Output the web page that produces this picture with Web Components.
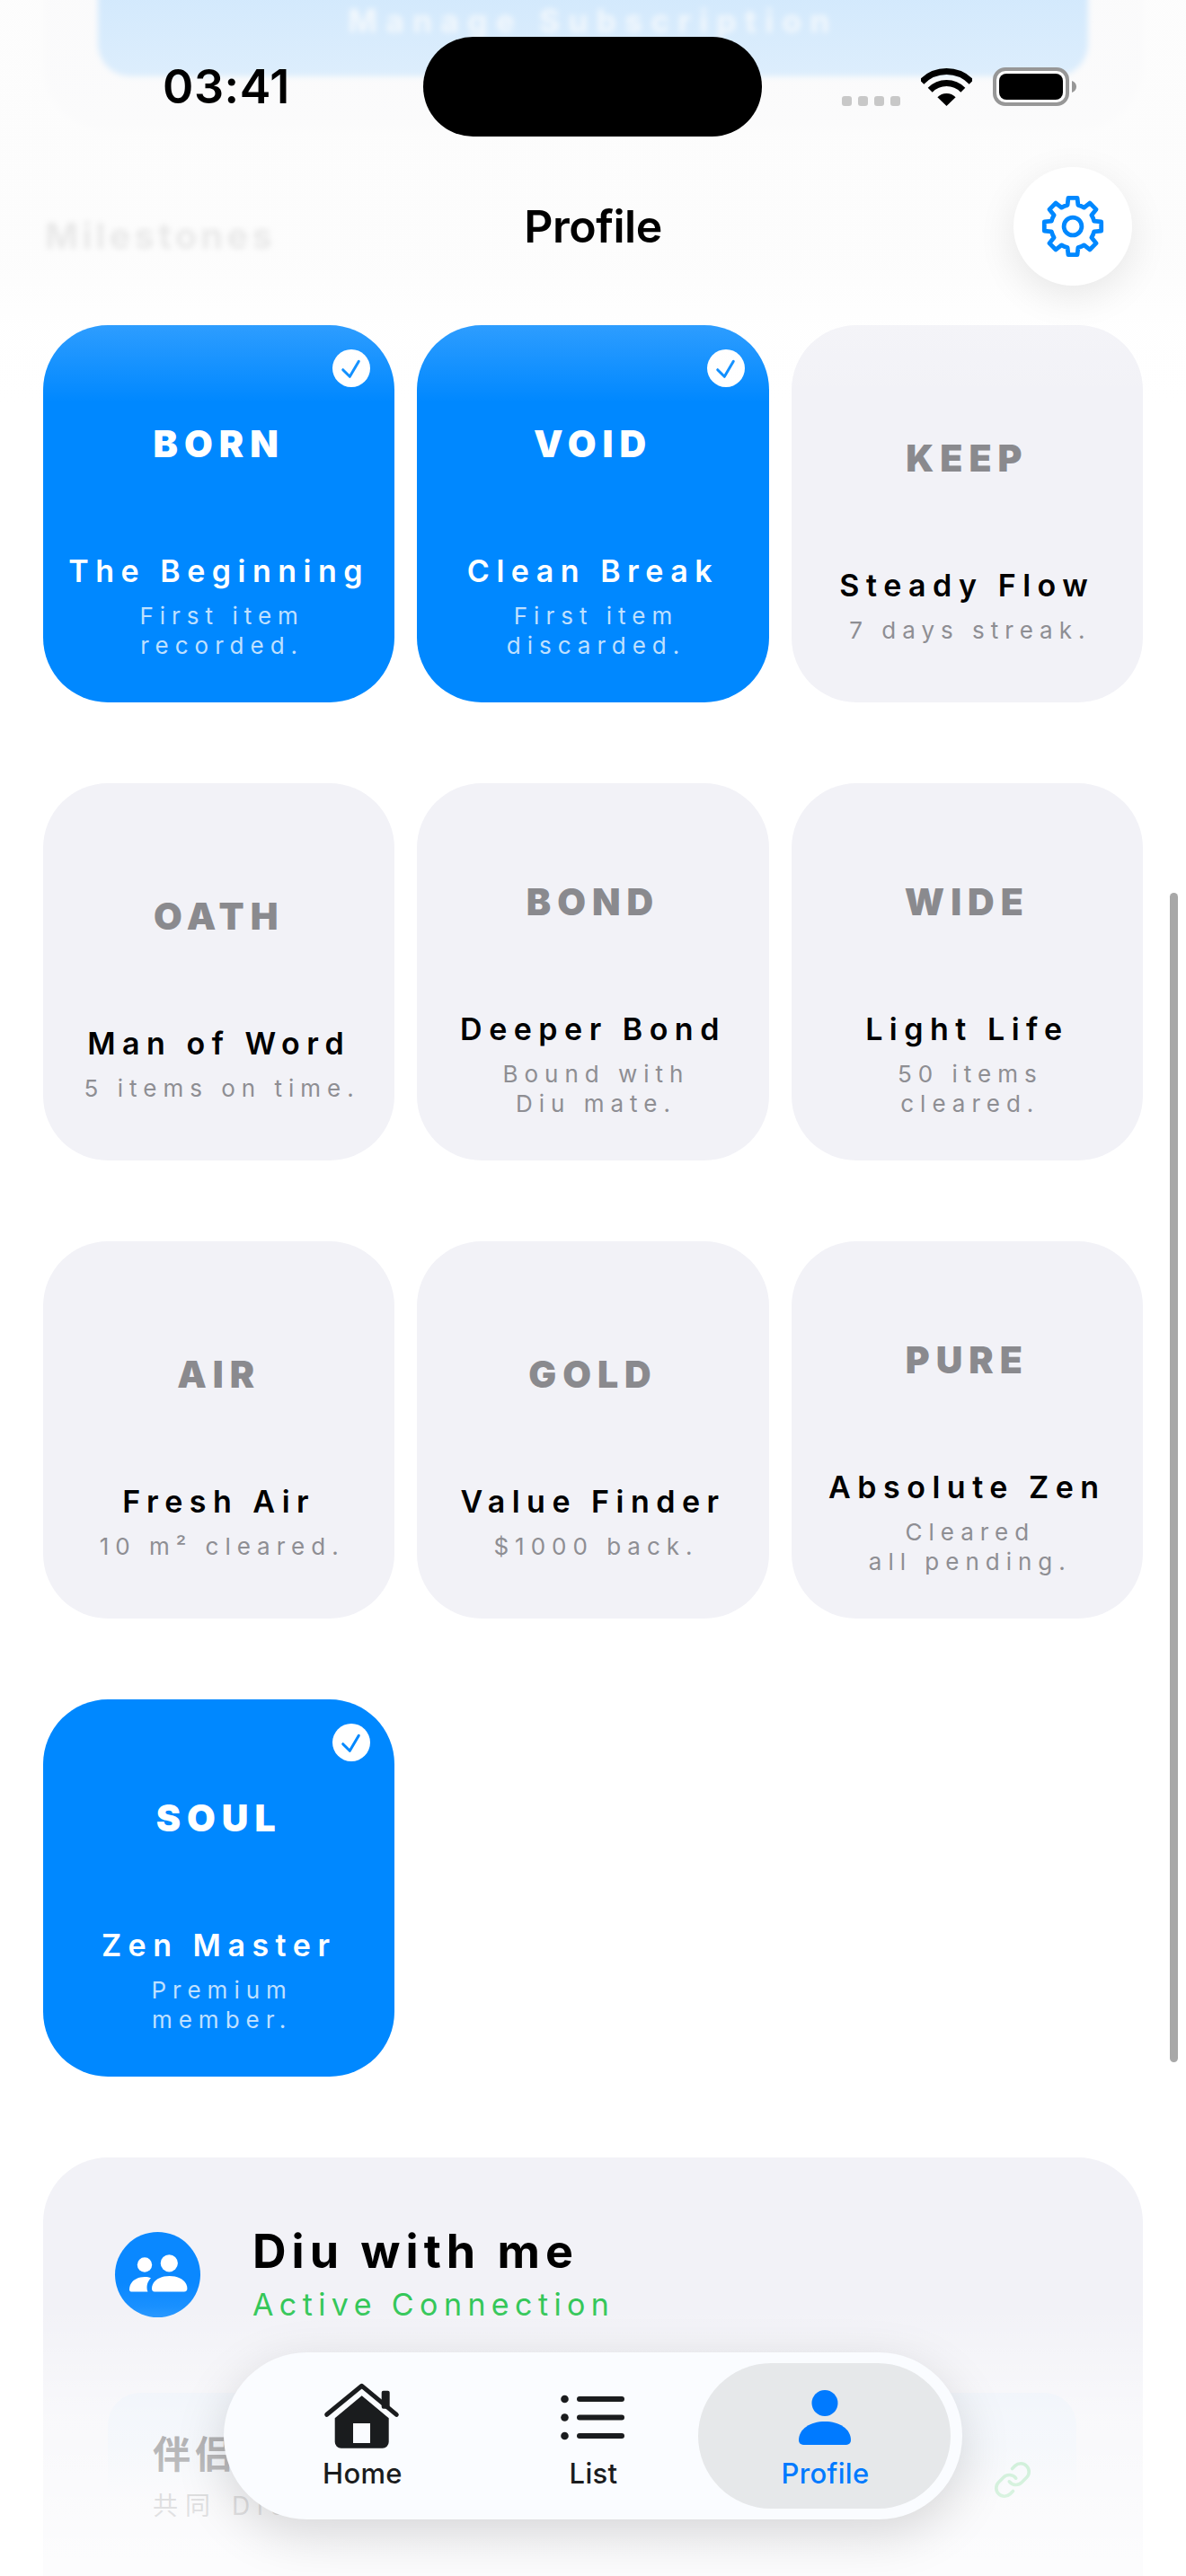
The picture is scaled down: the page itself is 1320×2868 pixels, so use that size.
<!DOCTYPE html>
<html lang="en">
<head>
<meta charset="utf-8">
<title>Profile</title>
<style>
    html, body { margin: 0; background: #fff; }
    body { font-family: Inter, "Noto Sans CJK SC", sans-serif; }
</style>
</head>
<body>
<profile-screen>
    <plan-card slot="content"></plan-card>
    <section-title slot="content">Milestones</section-title>
    <milestone-grid slot="content">
        <milestone-card code="BORN" name="The Beginning" done>First item<br>recorded.</milestone-card>
        <milestone-card code="VOID" name="Clean Break" done>First item<br>discarded.</milestone-card>
        <milestone-card code="KEEP" name="Steady Flow">7 days streak.</milestone-card>
        <milestone-card code="OATH" name="Man of Word">5 items on time.</milestone-card>
        <milestone-card code="BOND" name="Deeper Bond">Bound with<br>Diu mate.</milestone-card>
        <milestone-card code="WIDE" name="Light Life">50 items<br>cleared.</milestone-card>
        <milestone-card code="AIR" name="Fresh Air">10 m² cleared.</milestone-card>
        <milestone-card code="GOLD" name="Value Finder">$1000 back.</milestone-card>
        <milestone-card code="PURE" name="Absolute Zen">Cleared<br>all pending.</milestone-card>
        <milestone-card code="SOUL" name="Zen Master" done>Premium<br>member.</milestone-card>
    </milestone-grid>
    <link-card slot="content"></link-card>

    <status-bar slot="overlay"></status-bar>
    <nav-header slot="overlay">Profile</nav-header>
    <tab-bar slot="overlay"></tab-bar>
</profile-screen>

<script>
const SCREEN_TEMPLATE = `
    <style>
        :host {
            display: block;
            position: relative;
            width: 1320px;
            height: 2868px;
            overflow: hidden;
            background: #fff;
        }
        .scroll {
            height: 100%;
            padding: 0 48px;
            box-sizing: border-box;
        }
        /* fades sit over the scrolled content */
        .top-fade {
            position: absolute;
            top: 0;
            left: 0;
            right: 0;
            height: 450px;
            background: linear-gradient(to bottom,
                rgba(252, 252, 252, 0.84) 0,
                rgba(252, 252, 252, 0.9) 150px,
                rgba(252, 252, 252, 0.9) 290px,
                rgba(252, 252, 252, 0.18) 362px,
                rgba(252, 252, 252, 0) 448px);
        }
        .bottom-fade {
            position: absolute;
            bottom: 0;
            left: 0;
            right: 0;
            height: 300px;
            background: linear-gradient(to bottom,
                rgba(255, 255, 255, 0) 0,
                rgba(255, 255, 255, 0.5) 120px,
                rgba(255, 255, 255, 0.8) 100%);
        }
        .scrollbar {
            position: absolute;
            top: 994px;
            right: 9px;
            width: 9px;
            height: 1302px;
            border-radius: 5px;
            background: #a8a8a8;
        }
    </style>
    <div class="scroll"><slot name="content"></slot></div>
    <div class="top-fade"></div>
    <div class="bottom-fade"></div>
    <div class="scrollbar"></div>
    <slot name="overlay"></slot>
`;

class ProfileScreen extends HTMLElement {
    constructor() {
        super();
        this.attachShadow({ mode: 'open' });
        this.shadowRoot.innerHTML = SCREEN_TEMPLATE;
    }
}

const STATUS_TEMPLATE = `
    <style>
        :host {
            display: flex;
            position: absolute;
            top: 0;
            left: 0;
            padding: 41px 0 0 181px;
            align-items: center;
            color: #000;
        }
        .time {
            width: 290px;
            font-size: 52px;
            font-weight: 600;
            line-height: 60px;
            letter-spacing: 0.6px;
        }
        .island {
            width: 377px;
            height: 111px;
            border-radius: 56px;
            background: #000;
        }
        .icons {
            display: flex;
            align-items: flex-end;
            gap: 23px;
            margin-left: 89px;
        }
        .dots { display: flex; gap: 7px; }
        .dots i {
            width: 11px;
            height: 11px;
            border-radius: 3px;
            background: #c8c8c8;
        }
        svg { display: block; }
    </style>
    <span class="time">03:41</span>
    <div class="island"></div>
    <div class="icons">
        <div class="dots"><i></i><i></i><i></i><i></i></div>
        <svg width="57" height="42" viewBox="0 0 57 42" fill="none" stroke="#000" stroke-width="7">
            <path d="M.8 15.3a38.5 38.5 0 0 1 55.4 0"/>
            <path d="M10.2 24.3a25.5 25.5 0 0 1 36.6 0"/>
            <path d="M28.5 42 18.4 32.3a14 14 0 0 1 20.2 0z" fill="#000" stroke="none"/>
        </svg>
        <svg width="93" height="43" viewBox="0 0 93 43">
            <rect x="2" y="2" width="81" height="39" rx="12" fill="#fff" stroke="#979797" stroke-width="4"/>
            <rect x="7" y="7" width="71" height="29" rx="8"/>
            <path d="M88 15c3 1 5 3.500 5 6.500s-2 5.500-5 6.500z" fill="#979797"/>
        </svg>
    </div>
`;

class StatusBar extends HTMLElement {
    constructor() {
        super();
        this.attachShadow({ mode: 'open' });
        this.shadowRoot.innerHTML = STATUS_TEMPLATE;
    }
}

// cog outline, eight teeth, one on each axis
function gearPath(cx, cy) {
    const pt = (r, deg) => {
        const a = deg * Math.PI / 180;
        return (cx + r * Math.cos(a)).toFixed(2) + ' ' + (cy + r * Math.sin(a)).toFixed(2);
    };
    const outer = 32.1;
    const root = 24.4;
    let d = '';
    for (let i = 0; i < 8; i++) {
        const a = i * 45;
        d += (i ? 'L' : 'M') + pt(root, a - 14);
        d += 'L' + pt(outer, a - 9) + 'L' + pt(outer, a + 9) + 'L' + pt(root, a + 14);
        d += `A${root} ${root} 0 0 1 ` + pt(root, a + 31);
    }
    return d + 'Z';
}

const HEADER_TEMPLATE = `
    <style>
        :host {
            display: grid;
            position: absolute;
            top: 186px;
            left: 0;
            right: 0;
            padding: 0 60px;
            grid-template-columns: 1fr auto 1fr;
            align-items: center;
        }
        .title {
            grid-column: 2;
            font-size: 50px;
            font-weight: 600;
            letter-spacing: -0.5px;
            color: #000;
        }
        .gear {
            grid-column: 3;
            justify-self: end;
            display: flex;
            width: 132px;
            height: 132px;
            border-radius: 50%;
            align-items: center;
            justify-content: center;
            background: #fff;
            box-shadow: 0 12px 44px rgba(0, 0, 0, 0.09);
        }
    </style>
    <div class="title"><slot></slot></div>
    <div class="gear">
        <svg width="72" height="72" viewBox="0 0 72 72" fill="none" stroke="#0088ff" stroke-width="4.8" stroke-linejoin="round">
            <path></path>
            <circle cx="36" cy="36" r="9.9"/>
        </svg>
    </div>
`;

class NavHeader extends HTMLElement {
    constructor() {
        super();
        this.attachShadow({ mode: 'open' });
        this.shadowRoot.innerHTML = HEADER_TEMPLATE;
        this.shadowRoot.querySelector('path').setAttribute('d', gearPath(36, 36));
    }
}

const PLAN_TEMPLATE = `
    <style>
        :host {
            display: block;
            margin-top: -200px;
            height: 345px;
            padding: 0 61px;
            box-sizing: border-box;
            border-radius: 72px;
            background: #f2f2f7;
            filter: blur(3px);
        }
        .button {
            display: flex;
            height: 285px;
            padding-bottom: 41px;
            box-sizing: border-box;
            align-items: flex-end;
            justify-content: center;
            border-radius: 36px;
            background: #0088ff;
            color: rgba(255, 255, 255, 0.75);
            font-size: 35px;
            font-weight: 700;
            letter-spacing: 9.500px;
        }
    </style>
    <div class="button">Manage Subscription</div>
`;

class PlanCard extends HTMLElement {
    constructor() {
        super();
        this.attachShadow({ mode: 'open' });
        this.shadowRoot.innerHTML = PLAN_TEMPLATE;
    }
}

class SectionTitle extends HTMLElement {
    constructor() {
        super();
        this.attachShadow({ mode: 'open' });
        this.shadowRoot.innerHTML = `
            <style>
                :host {
                    display: block;
                    margin: 94px 0 75px;
                    padding-left: 2px;
                    font-size: 40px;
                    font-weight: 700;
                    line-height: 48px;
                    letter-spacing: 4.200px;
                    color: #333;
                    filter: blur(3px);
                }
            </style>
            <slot></slot>
        `;
    }
}

class MilestoneGrid extends HTMLElement {
    constructor() {
        super();
        this.attachShadow({ mode: 'open' });
        this.shadowRoot.innerHTML = `
            <style>
                :host {
                    display: grid;
                    grid-template-columns: repeat(3, 1fr);
                    grid-auto-rows: 420px;
                    gap: 90px 25px;
                }
            </style>
            <slot></slot>
        `;
    }
}

const CARD_TEMPLATE = `
    <style>
        :host {
            display: flex;
            position: relative;
            flex-direction: column;
            align-items: center;
            justify-content: center;
            padding-top: 59px;
            box-sizing: border-box;
            border-radius: 72px;
            background: #f2f2f7;
            color: #000;
            text-align: center;
        }
        :host([done]) {
            background: #0088ff;
            color: #fff;
        }
        .code {
            font-size: 41px;
            font-weight: 900;
            line-height: 50px;
            letter-spacing: 7px;
            color: #8a8a8e;
        }
        :host([done]) .code { color: #fff; }
        .name {
            margin-top: 97px;
            font-size: 34px;
            font-weight: 600;
            line-height: 40px;
            letter-spacing: 7.500px;
            white-space: nowrap;
        }
        .note {
            margin-top: 13px;
            padding-left: 7px;
            font-size: 26px;
            font-weight: 400;
            line-height: 33px;
            letter-spacing: 7px;
            color: #8e8e93;
            white-space: nowrap;
        }
        :host([done]) .note { color: rgba(255, 255, 255, 0.75); }
        .check {
            display: none;
            position: absolute;
            top: 27px;
            right: 27px;
            width: 42px;
            height: 42px;
            border-radius: 50%;
            background: #fff;
        }
        :host([done]) .check { display: block; }
    </style>
    <span class="code"></span>
    <span class="name"></span>
    <span class="note"><slot></slot></span>
    <svg class="check" viewBox="0 0 42 42" fill="none" stroke="#0088ff" stroke-width="3" stroke-linecap="round" stroke-linejoin="round">
        <path d="M11.700 22.700 19.300 30.300 29.300 13.300"/>
    </svg>
`;

class MilestoneCard extends HTMLElement {
    constructor() {
        super();
        this.attachShadow({ mode: 'open' });
        this.shadowRoot.innerHTML = CARD_TEMPLATE;
    }

    connectedCallback() {
        this.shadowRoot.querySelector('.code').textContent = this.getAttribute('code');
        this.shadowRoot.querySelector('.name').textContent = this.getAttribute('name');
    }
}

const LINK_TEMPLATE = `
    <style>
        :host {
            display: block;
            margin-top: 90px;
            padding: 77px 74px 0 72px;
            height: 600px;
            box-sizing: border-box;
            border-radius: 72px;
            background: #f2f2f7;
        }
        .head {
            display: flex;
            align-items: center;
            gap: 58px;
            padding-left: 8px;
        }
        .avatar {
            display: block;
            width: 95px;
            height: 95px;
            border-radius: 50%;
            background: linear-gradient(#0a88ff 60%, #2094ff);
        }
        h2 {
            margin: 0;
            font-size: 52px;
            font-weight: 700;
            line-height: 56px;
            letter-spacing: 6px;
            color: #000;
        }
        .state {
            margin-top: 11px;
            font-size: 34px;
            line-height: 40px;
            letter-spacing: 6.400px;
            color: #34c759;
        }
        .partner {
            display: flex;
            margin-top: 78px;
            height: 190px;
            padding: 0 49px 0 50px;
            box-sizing: border-box;
            align-items: center;
            justify-content: space-between;
            border-radius: 36px;
            background: linear-gradient(#e9eff8 0, #e9eff8 60px, rgba(233, 239, 248, 0) 120px);
        }
        .who { margin-top: 0; }
        .who b {
            display: block;
            font-size: 42px;
            font-weight: 700;
            line-height: 46px;
            letter-spacing: 5px;
            color: #58585c;
        }
        .who span {
            display: block;
            margin-top: 16px;
            font-size: 28px;
            line-height: 36px;
            letter-spacing: 8px;
            color: #a0a0a4;
        }
        .chain { margin-top: 4px; opacity: 0.5; }
    </style>
    <div class="head">
        <svg class="avatar" viewBox="0 0 95 95" fill="#fff">
            <circle cx="60.300" cy="34.800" r="9.600"/>
            <path d="M41 63c0-8 8-14 19.600-14s19.800 6 19.800 14c0 2.300-1.300 3.500-3.500 3.500H44c-2 0-3-1.300-3-3.500z"/>
            <circle cx="33" cy="36.500" r="8.200"/>
            <path d="M16 64c0-8 7-14 17-14 3 0 5 .5 7 1.300-3 3-4.500 6.500-4.500 10.700 0 1.800.3 3.300 1 4.500H18c-1.300 0-2-1-2-2.500z"/>
        </svg>
        <div>
            <h2>Diu with me</h2>
            <div class="state">Active Connection</div>
        </div>
    </div>
    <div class="partner">
        <div class="who">
            <b lang="zh">伴侣</b>
            <span lang="zh">共同 Diu</span>
        </div>
        <svg class="chain" width="44" height="44" viewBox="0 0 24 24" fill="none" stroke="#34c759" stroke-width="2" stroke-linecap="round" stroke-linejoin="round">
            <path d="M10 13a5 5 0 0 0 7.540.540l3-3a5 5 0 0 0-7.070-7.070l-1.720 1.710"/>
            <path d="M14 11a5 5 0 0 0-7.540-.540l-3 3a5 5 0 0 0 7.070 7.070l1.710-1.710"/>
        </svg>
    </div>
`;

class LinkCard extends HTMLElement {
    constructor() {
        super();
        this.attachShadow({ mode: 'open' });
        this.shadowRoot.innerHTML = LINK_TEMPLATE;
    }
}

const TAB_TEMPLATE = `
    <style>
        :host {
            display: flex;
            position: absolute;
            left: 249px;
            bottom: 63px;
            width: 822px;
            height: 186px;
            padding: 12px 13px 12px 25px;
            box-sizing: border-box;
            border-radius: 93px;
            background: #fafcff;
            box-shadow: 0 16px 56px rgba(0, 0, 0, 0.15);
        }
        .tab {
            display: flex;
            flex: 0 0 257px;
            flex-direction: column;
            align-items: center;
            padding-top: 20px;
            box-sizing: border-box;
            font-size: 31px;
            font-weight: 500;
            line-height: 36px;
            letter-spacing: 0.3px;
            color: #1a1c1e;
        }
        .tab.active {
            flex-basis: 281px;
            margin-left: -11px;
            border-radius: 81px;
            background: #e6e8ea;
            color: #007aff;
        }
        .tab span { margin-left: 2px; }
        .icon {
            display: flex;
            height: 80px;
            margin-bottom: 5px;
            align-items: center;
        }
    </style>
    <div class="tab">
        <div class="icon">
            <svg width="90" height="80" viewBox="0 0 90 80" fill="#1a1c1e">
                <path d="M5.700 37.300 44.700 5.300 83.300 37.300" fill="none" stroke="#1a1c1e" stroke-width="5" stroke-linecap="round" stroke-linejoin="round"/>
                <rect x="66.700" y="10.700" width="9" height="20" rx="2"/>
                <path fill-rule="evenodd" d="M44.700 16.300 14.700 41.300V67.700a7 7 0 0 0 7 7H67.700a7 7 0 0 0 7-7V41.300zM35 47H54V69H35z"/>
            </svg>
        </div>
        <span>Home</span>
    </div>
    <div class="tab">
        <div class="icon">
            <svg width="71" height="51" viewBox="0 0 71 51" fill="#1a1c1e">
                <circle cx="4.500" cy="5" r="4.300"/>
                <circle cx="4.500" cy="25.500" r="4.300"/>
                <circle cx="4.500" cy="46" r="4.300"/>
                <rect x="18" y="2" width="53" height="6" rx="3"/>
                <rect x="18" y="22.500" width="53" height="6" rx="3"/>
                <rect x="18" y="43" width="53" height="6" rx="3"/>
            </svg>
        </div>
        <span>List</span>
    </div>
    <div class="tab active">
        <div class="icon">
            <svg width="58" height="61" viewBox="0 0 58 61" fill="#007aff">
                <circle cx="29" cy="14.500" r="14.500"/>
                <path d="M0 56C0 43 13 35 29 35s29 8 29 21a5 5 0 0 1-5 5H5a5 5 0 0 1-5-5z"/>
            </svg>
        </div>
        <span>Profile</span>
    </div>
`;

class TabBar extends HTMLElement {
    constructor() {
        super();
        this.attachShadow({ mode: 'open' });
        this.shadowRoot.innerHTML = TAB_TEMPLATE;
    }
}

customElements.define('profile-screen', ProfileScreen);
customElements.define('status-bar', StatusBar);
customElements.define('nav-header', NavHeader);
customElements.define('plan-card', PlanCard);
customElements.define('section-title', SectionTitle);
customElements.define('milestone-grid', MilestoneGrid);
customElements.define('milestone-card', MilestoneCard);
customElements.define('link-card', LinkCard);
customElements.define('tab-bar', TabBar);
</script>
</body>
</html>
